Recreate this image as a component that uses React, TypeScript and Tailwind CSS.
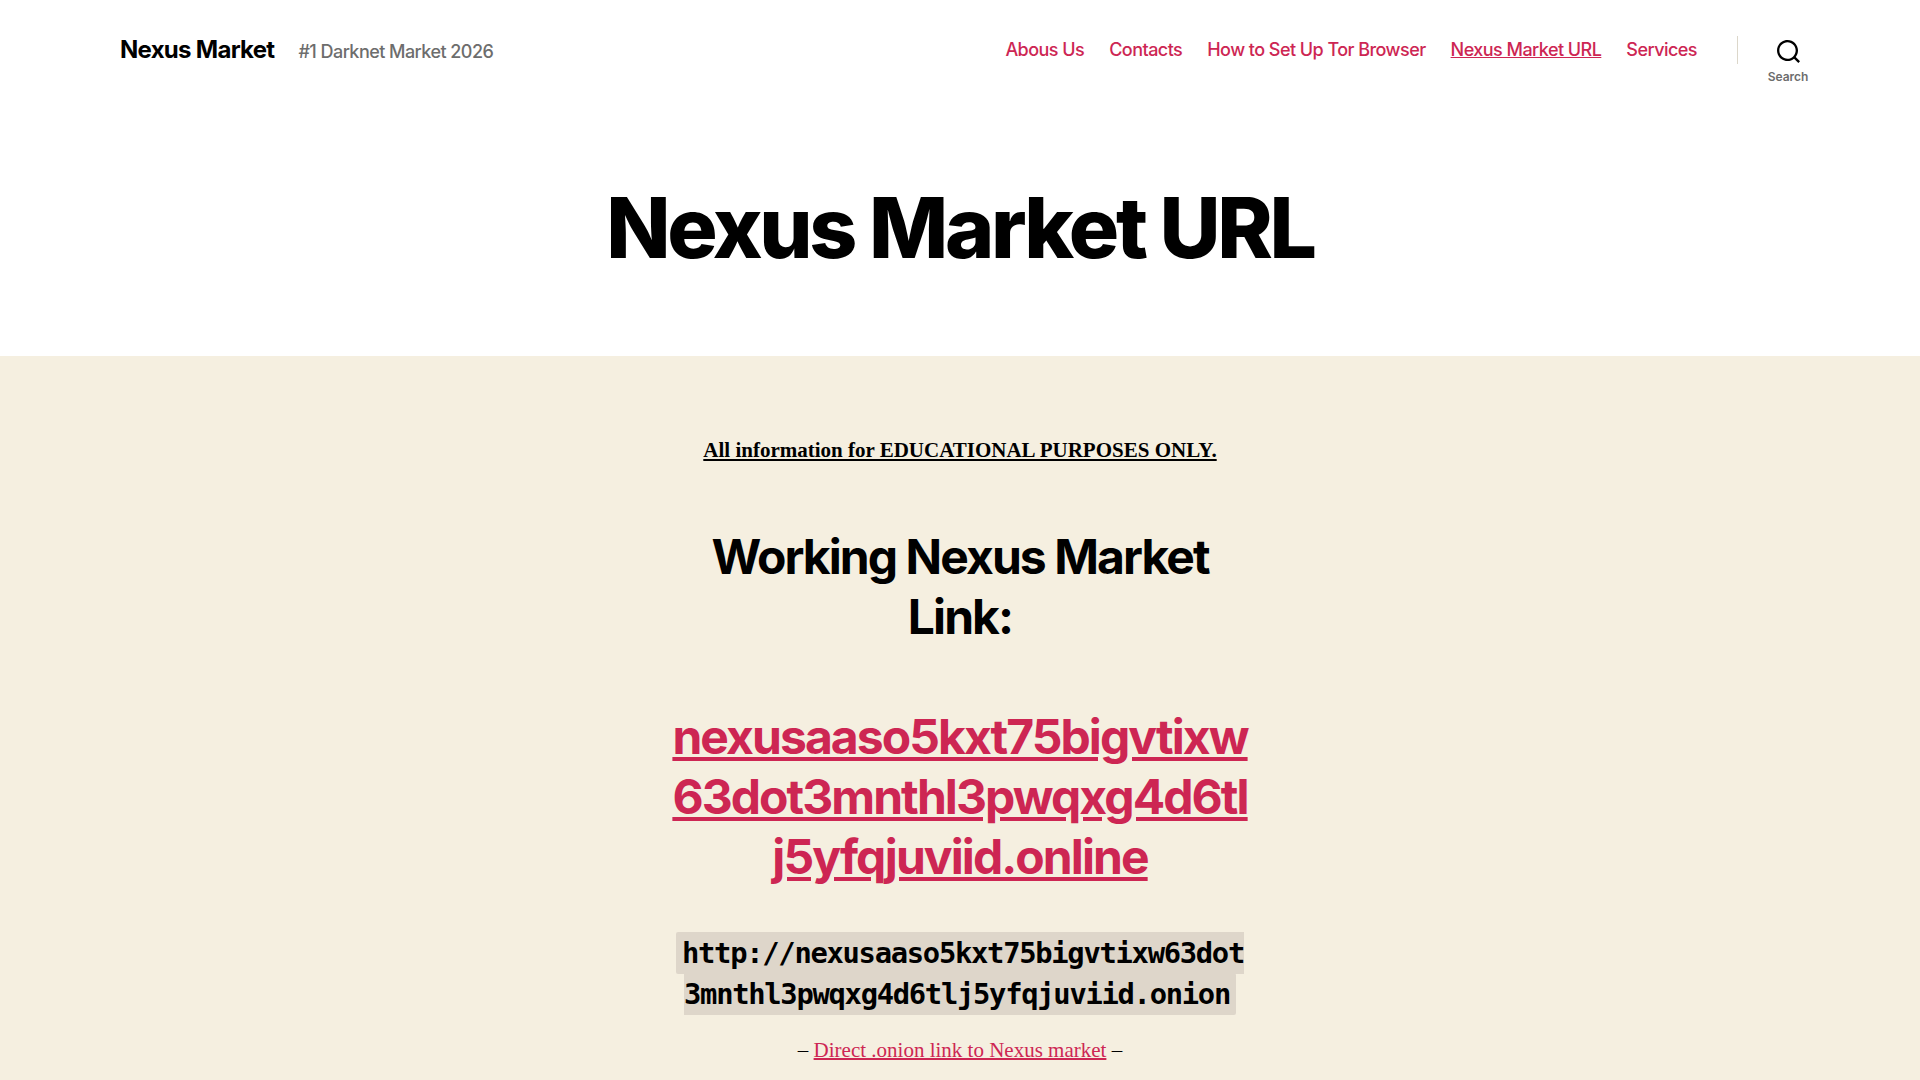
const navItems = [
  { label: "Abous Us" },
  { label: "Contacts" },
  { label: "How to Set Up Tor Browser" },
  { label: "Nexus Market URL", current: true },
  { label: "Services" },
];

function SearchIcon() {
  return (
    <svg className="h-[23px] w-[23px]" viewBox="0 0 23 23" fill="currentColor" aria-hidden="true">
      <path d="M38.710696,48.0601792 L43,52.3494831 L41.3494831,54 L37.0601792,49.710696 C35.2632422,51.1481185 32.9839107,52.0076499 30.5038249,52.0076499 C24.7027226,52.0076499 20,47.3049272 20,41.5038249 C20,35.7027226 24.7027226,31 30.5038249,31 C36.3049272,31 41.0076499,35.7027226 41.0076499,41.5038249 C41.0076499,43.9839107 40.1481185,46.2632422 38.710696,48.0601792 Z M36.3875844,47.1716785 C37.8030221,45.7026647 38.6734666,43.7048964 38.6734666,41.5038249 C38.6734666,36.9918565 35.0157934,33.3341833 30.5038249,33.3341833 C25.9918565,33.3341833 22.3341833,36.9918565 22.3341833,41.5038249 C22.3341833,46.0157934 25.9918565,49.6734666 30.5038249,49.6734666 C32.7048964,49.6734666 34.7026647,48.8030221 36.1716785,47.3875844 C36.2023931,47.347638 36.2360451,47.3092237 36.2726343,47.2726343 C36.3092237,47.2360451 36.347638,47.2023931 36.3875844,47.1716785 Z" transform="translate(-20 -31)" />
    </svg>
  );
}

export default function App() {
  return (
    <div className="min-h-screen overflow-x-hidden bg-[#f5efe0] font-['Inter',sans-serif] text-black">
      <header className="flex items-stretch bg-white pr-[102px] pl-30">
        <div className="flex flex-1 items-baseline gap-6 py-[34px]">
          <a href="#" className="text-2xl font-bold tracking-[-0.03em]">Nexus Market</a>
          <p className="text-lg font-medium tracking-[-0.03em] text-[#6d6d6d]">#1 Darknet Market 2026</p>
        </div>
        <nav className="flex items-start gap-[25px] pt-9 text-lg font-medium tracking-[-0.03em] text-[#cd2653]">
          {navItems.map((item) => (
            <a key={item.label} href="#" className={item.current ? "underline" : ""}>
              {item.label}
            </a>
          ))}
        </nav>
        <div className="mt-9 ml-10 h-7 w-px bg-[#dcd7ca]" />
        <button type="button" className="ml-5 flex w-15 flex-col items-center gap-1.5 pt-10">
          <SearchIcon />
          <span className="text-xs font-semibold text-[#6d6d6d]">Search</span>
        </button>
      </header>

      <main>
        <div className="bg-white pt-20 pb-20 text-center">
          <h1 className="text-[84px] leading-[96px] font-extrabold tracking-[-0.04em]">Nexus Market URL</h1>
        </div>

        <article className="mx-auto max-w-[580px] pt-20 pb-4 text-center">
          <p className="font-['Liberation_Serif',serif] text-[21px] leading-7 font-bold underline">
            All information for EDUCATIONAL PURPOSES ONLY.
          </p>
          <h2 className="mt-[63px] text-5xl leading-[60px] font-bold tracking-[-0.04em]">Working Nexus Market Link:</h2>
          <h2 className="mt-15 text-5xl leading-[60px] font-bold tracking-[-0.04em] break-all text-[#cd2653]">
            <a href="#" className="underline">nexusaaso5kxt75bigvtixw63dot3mnthl3pwqxg4d6tlj5yfqjuviid.online</a>
          </h2>
          <h3 className="mt-[45px] text-[32px] leading-10 font-bold tracking-[-0.04em] break-all">
            <code className="rounded-xs bg-[#ded6ca] px-1.5 py-1 font-['DejaVu_Sans_Mono',monospace] text-[0.9em]">
              http://nexusaaso5kxt75bigvtixw63dot3mnthl3pwqxg4d6tlj5yfqjuviid.onion
            </code>
          </h3>
          <p className="mt-[22px] font-['Liberation_Serif',serif] text-[21px] leading-7">
            – <a href="#" className="text-[#cd2653] underline decoration-2">Direct .onion link to Nexus market</a> –
          </p>
        </article>
      </main>
    </div>
  );
}
